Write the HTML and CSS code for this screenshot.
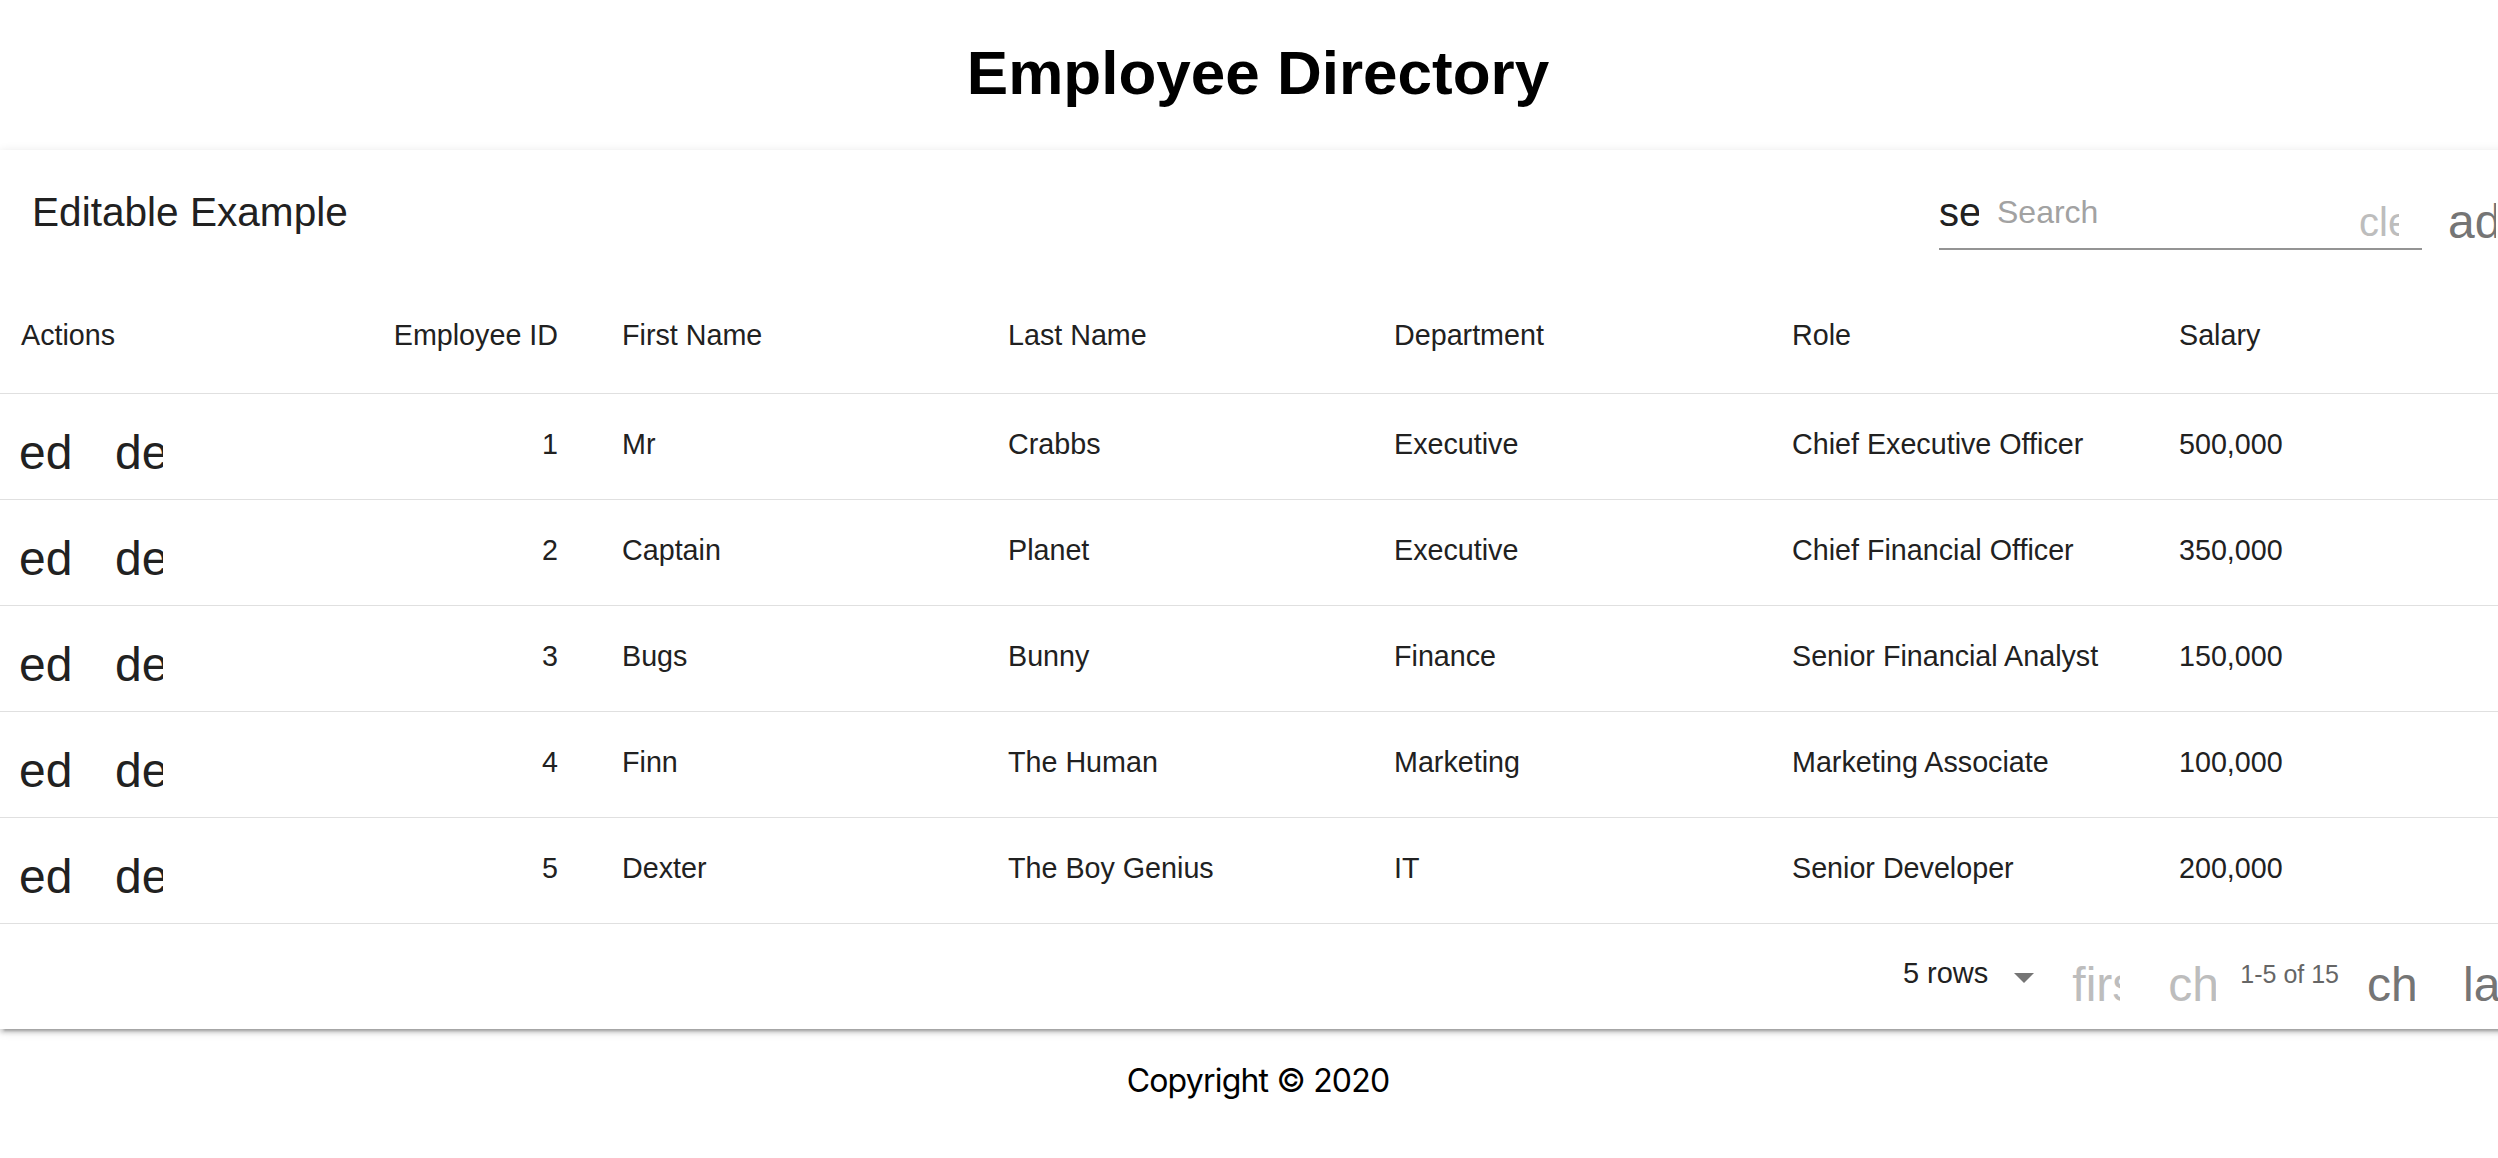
FILE: index.html
```html
<!DOCTYPE html>
<html lang="en">
<head>
<meta charset="utf-8">
<title>Employee Directory</title>
<link rel="stylesheet" href="styles.css">
</head>
<body>
<div class="app">
  <header class="page-header">
    <h1 class="title">Employee Directory</h1>
  </header>

  <div class="paper">
    <div class="toolbar">
      <div class="toolbar-title">Editable Example</div>
      <div class="spacer"></div>
      <div class="search">
        <span class="icon icon-sm icon-dark">search</span>
        <span class="search-placeholder">Search</span>
        <span class="icon icon-sm icon-disabled clear-icon">clear</span>
      </div>
      <span class="add-btn"><span class="icon icon-gray">add_box</span></span>
    </div>

    <table class="grid">
      <colgroup>
        <col class="c-actions">
        <col class="c-id">
        <col class="c-first">
        <col class="c-last">
        <col class="c-dept">
        <col class="c-role">
        <col class="c-salary">
      </colgroup>
      <thead>
        <tr>
          <th class="th-actions">Actions</th>
          <th class="num">Employee ID</th>
          <th>First Name</th>
          <th>Last Name</th>
          <th>Department</th>
          <th>Role</th>
          <th>Salary</th>
        </tr>
      </thead>
      <tbody>
        <tr>
          <td class="td-actions"><div class="actions"><span class="icon icon-dark icon-edit">edit</span><span class="icon icon-dark">delete</span></div></td>
          <td class="num">1</td>
          <td>Mr</td>
          <td>Crabbs</td>
          <td>Executive</td>
          <td>Chief Executive Officer</td>
          <td>500,000</td>
        </tr>
        <tr>
          <td class="td-actions"><div class="actions"><span class="icon icon-dark icon-edit">edit</span><span class="icon icon-dark">delete</span></div></td>
          <td class="num">2</td>
          <td>Captain</td>
          <td>Planet</td>
          <td>Executive</td>
          <td>Chief Financial Officer</td>
          <td>350,000</td>
        </tr>
        <tr>
          <td class="td-actions"><div class="actions"><span class="icon icon-dark icon-edit">edit</span><span class="icon icon-dark">delete</span></div></td>
          <td class="num">3</td>
          <td>Bugs</td>
          <td>Bunny</td>
          <td>Finance</td>
          <td>Senior Financial Analyst</td>
          <td>150,000</td>
        </tr>
        <tr>
          <td class="td-actions"><div class="actions"><span class="icon icon-dark icon-edit">edit</span><span class="icon icon-dark">delete</span></div></td>
          <td class="num">4</td>
          <td>Finn</td>
          <td>The Human</td>
          <td>Marketing</td>
          <td>Marketing Associate</td>
          <td>100,000</td>
        </tr>
        <tr>
          <td class="td-actions"><div class="actions"><span class="icon icon-dark icon-edit">edit</span><span class="icon icon-dark">delete</span></div></td>
          <td class="num">5</td>
          <td>Dexter</td>
          <td>The Boy Genius</td>
          <td>IT</td>
          <td>Senior Developer</td>
          <td>200,000</td>
        </tr>
      </tbody>
    </table>

    <div class="pagination">
      <span class="rows-select">5 rows</span>
      <svg class="dropdown-arrow" width="20" height="10" viewBox="0 0 20 10"><path d="M0 0 L10 10 L20 0 Z"/></svg>
      <span class="page-btn first-btn"><span class="icon icon-disabled">first_page</span></span>
      <span class="page-btn"><span class="icon icon-disabled">chevron_left</span></span>
      <span class="page-info">1-5 of 15</span>
      <span class="page-btn"><span class="icon icon-gray">chevron_right</span></span>
      <span class="page-btn last-btn"><span class="icon icon-gray">last_page</span></span>
    </div>
  </div>

  <footer class="page-footer">Copyright © 2020</footer>
</div>
</body>
</html>
```

FILE: styles.css
```css
html, body {
  margin: 0;
  padding: 0;
  overflow: hidden;
  background: #ffffff;
}

body {
  font-family: "Liberation Sans", Arial, Helvetica, sans-serif;
  color: #212121;
}

.app {
  width: 2516px;
}

/* Header */
.page-header {
  height: 150px;
  box-sizing: border-box;
  padding-top: 35px;
  text-align: center;
}

.title {
  margin: 0;
  font-size: 62px;
  line-height: 76px;
  font-weight: 700;
  color: #000000;
}

/* Paper */
.paper {
  background: #ffffff;
  box-shadow: 0 6px 2px -4px rgba(0, 0, 0, 0.2),
              0 4px 4px 0 rgba(0, 0, 0, 0.14),
              0 2px 10px 0 rgba(0, 0, 0, 0.12);
}

/* Icons (ligature text, clipped like a missing icon font) */
.icon {
  display: inline-block;
  width: 48px;
  height: 48px;
  font-size: 48px;
  line-height: 48px;
  overflow: hidden;
  white-space: nowrap;
  flex: none;
}

.icon-sm {
  width: 40px;
  height: 40px;
  font-size: 40px;
  line-height: 40px;
}

.icon-dark { color: #212121; }
.icon-gray { color: #757575; }
.icon-disabled { color: #bdbdbd; }

/* Toolbar */
.toolbar {
  display: flex;
  align-items: flex-start;
  height: 130px;
  padding-left: 32px;
}

.toolbar-title {
  font-size: 40.6px;
  line-height: 64px;
  margin-top: 30px;
  color: #212121;
}

.spacer {
  flex: 1;
}

.search {
  display: flex;
  align-items: flex-start;
  width: 483px;
  height: 56px;
  padding-top: 10px;
  margin-top: 32px;
  border-bottom: 2px solid #949494;
  flex: none;
}

.search-placeholder {
  flex: 1;
  margin-left: 18px;
  font-size: 32px;
  line-height: 40px;
  color: #a2a2a2;
}

.clear-icon {
  margin-top: 10px;
  margin-right: 23px;
}

.add-btn {
  display: flex;
  flex: none;
  margin-left: 2px;
  padding: 0 20px 0 24px;
  margin-top: 48px;
}

/* Table */
.grid {
  width: 2516px;
  table-layout: fixed;
  border-collapse: separate;
  border-spacing: 0;
}

.c-actions { width: 300px; }
.c-id { width: 290px; }
.c-first { width: 386px; }
.c-last { width: 386px; }
.c-dept { width: 398px; }
.c-role { width: 387px; }
.c-salary { width: 369px; }

.grid th,
.grid td {
  font-size: 28.7px;
  line-height: 48px;
  text-align: left;
  white-space: nowrap;
  color: #212121;
  border-bottom: 1px solid #e0e0e0;
  padding-left: 32px;
  padding-right: 0;
}

.grid th {
  font-weight: 400;
  padding-top: 31px;
  padding-bottom: 34px;
}

.grid td {
  padding-top: 26px;
  padding-bottom: 31px;
}

.grid .num {
  text-align: right;
  padding-left: 0;
  padding-right: 32px;
}

.grid .th-actions {
  padding-left: 21px;
}

.grid .td-actions {
  padding-left: 19px;
  padding-top: 35px;
  padding-bottom: 22px;
}

.actions {
  display: flex;
}

.icon-edit {
  width: 51px;
  margin-right: 45px;
}

/* Pagination */
.pagination {
  display: flex;
  justify-content: flex-end;
  align-items: flex-start;
  height: 105px;
  padding-right: 5px;
}

.rows-select {
  font-size: 29px;
  line-height: 48px;
  margin-top: 25px;
  color: #212121;
  white-space: nowrap;
}

.dropdown-arrow {
  margin-top: 49px;
  margin-left: 26px;
  fill: #757575;
  flex: none;
}

.page-btn {
  display: flex;
  flex: none;
  padding: 0 24px;
  margin-top: 37px;
}

.first-btn {
  margin-left: 14px;
}

.last-btn {
  padding-right: 0;
}

.page-info {
  font-size: 25px;
  line-height: 48px;
  margin-top: 26px;
  margin-right: 4px;
  color: #666666;
  white-space: nowrap;
}

/* Footer */
.page-footer {
  padding-top: 28px;
  font-family: Inter, "Liberation Sans", Arial, sans-serif;
  font-size: 32px;
  letter-spacing: -0.8px;
  line-height: 48px;
  text-align: center;
  color: #000000;
}
```
